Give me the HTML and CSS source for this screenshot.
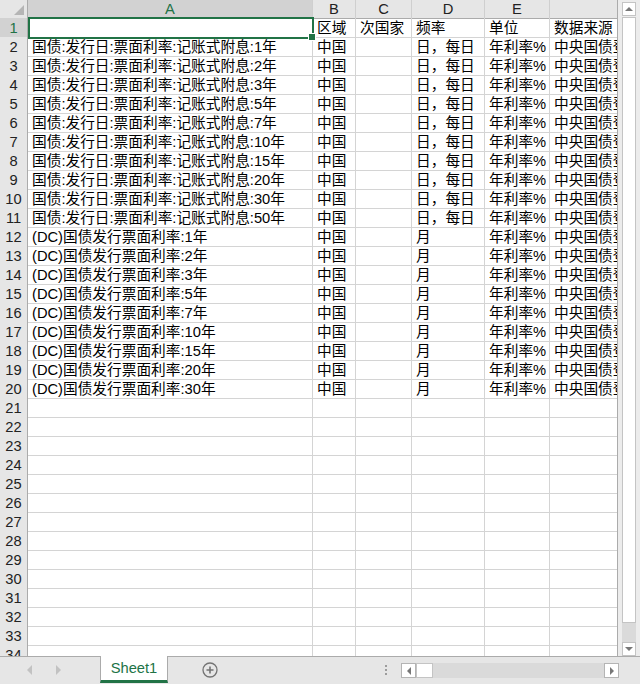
FILE: index.html
```html
<!DOCTYPE html>
<html lang="zh-CN">
<head>
    <meta charset="UTF-8">
    <meta name="viewport" content="width=device-width, initial-scale=1.0">
    <title>Sheet1</title>
    <link rel="stylesheet" href="styles.css">
</head>
<body>
    <main class="app">
        <section class="sheet-area">
            <div class="grid" id="grid">
                <div class="row head-row">
                    <div class="corner"><span class="corner-tri"></span></div>
                    <div class="col-head selected">A</div>
                    <div class="col-head">B</div>
                    <div class="col-head">C</div>
                    <div class="col-head">D</div>
                    <div class="col-head">E</div>
                    <div class="col-head last"></div>
                </div>
            </div>
            <div class="vscroll">
                <div class="sb-btn"><span class="arrow-up"></span></div>
                <div class="sb-thumb"></div>
                <div class="sb-track"></div>
                <div class="sb-btn"><span class="arrow-down"></span></div>
            </div>
        </section>
        <footer class="tabbar">
            <div class="tab-nav">
                <span class="nav-left"></span>
                <span class="nav-right"></span>
            </div>
            <div class="sheet-tab">Sheet1</div>
            <div class="add-sheet">
                <svg width="16" height="16" viewBox="0 0 16 16">
                    <circle cx="8" cy="8" r="7" fill="none" stroke="#737373" stroke-width="1.3"/>
                    <path d="M8 4.5v7M4.5 8h7" stroke="#737373" stroke-width="1.6"/>
                </svg>
            </div>
            <div class="split-dots"><i></i><i></i><i></i></div>
            <div class="hscroll">
                <div class="hs-btn"><span class="arrow-left"></span></div>
                <div class="hs-thumb"></div>
                <div class="hs-track"></div>
                <div class="hs-btn"><span class="arrow-right"></span></div>
            </div>
        </footer>
    </main>
    <script>
        const grid=document.getElementById("grid")
        const spans=[1,2,3,5,7,10,15,20,30,50]
        const dc=[1,2,3,5,7,10,15,20,30]
        let data=[["","区域","次国家","频率","单位","数据来源"]]
        for(const n of spans){
            data.push([`国债:发行日:票面利率:记账式附息:${n}年`,"中国","","日，每日","年利率%","中央国债登记结算"])
        }
        for(const n of dc){
            data.push([`(DC)国债发行票面利率:${n}年`,"中国","","月","年利率%","中央国债登记结算"])
        }
        let tmpStr=""
        for(let i=1;i<=34;i++){
            const cells=data[i-1]||["","","","","",""]
            tmpStr+=`<div class="row">
                <div class="row-head ${i==1?"selected":""}">${i}</div>
                ${cells.map((c,j)=>`<div class="cell ${i==1&&j==0?"active":""}">${c}</div>`).join("")}
            </div>`
        }
        grid.insertAdjacentHTML("beforeend",tmpStr)
    </script>
</body>
</html>
```

FILE: styles.css
```css
*{
    margin: 0;
    padding: 0;
    box-sizing: border-box;
}
body{
    font-family: "Liberation Sans", "Noto Sans CJK SC", sans-serif;
    font-size: 14.7px;
    color: #000;
    background-color: #e6e6e6;
}
.app{
    width: 640px;
    height: 684px;
    display: flex;
    flex-direction: column;
    overflow: hidden;
}
.sheet-area{
    height: 656px;
    display: flex;
    background-color: #ececec;
}
.grid{
    width: 618px;
    height: 656px;
    overflow: hidden;
    background-color: #fff;
    flex-shrink: 0;
}
.row{
    display: grid;
    grid-template-columns: 28px 285px 43px 56px 73px 65px 68px;
    height: 19px;
}
.head-row{
    height: 18px;
}
.corner,.col-head,.row-head{
    background-color: #e6e6e6;
    color: #222;
    text-align: center;
}
.corner{
    border-right: 1px solid #ababab;
    border-bottom: 1px solid #ababab;
    display: flex;
    justify-content: flex-end;
    align-items: flex-end;
    padding: 0 3px 3px 0;
}
.corner-tri{
    width: 0;
    height: 0;
    border-left: 10px solid transparent;
    border-bottom: 10px solid #b5b5b5;
}
.col-head{
    border-right: 1px solid #cfcfcf;
    border-bottom: 1px solid #ababab;
    padding-top: 1px;
    line-height: 17px;
}
.col-head.last{
    border-right: 1px solid #ababab;
}
.row-head{
    border-right: 1px solid #ababab;
    border-bottom: 1px solid #cfcfcf;
    padding-top: 1px;
    line-height: 18px;
}
.selected{
    background-color: #d2d2d2;
    color: #217346;
}
.cell{
    border-right: 1px solid #d4d4d4;
    border-bottom: 1px solid #d4d4d4;
    padding: 1px 4px 0 4px;
    line-height: 18px;
    white-space: nowrap;
    overflow: hidden;
}
.cell:last-child{
    border-right: 1px solid #ababab;
}
.cell.active{
    position: relative;
    overflow: visible;
}
.cell.active::after{
    content: "";
    position: absolute;
    left: 0;
    top: -1px;
    right: -2px;
    bottom: -2px;
    border: 2px solid #217346;
}
.cell.active::before{
    content: "";
    position: absolute;
    right: -4px;
    bottom: -4px;
    width: 6px;
    height: 6px;
    background-color: #217346;
    border: 1px solid #fff;
    z-index: 2;
}
.vscroll{
    width: 22px;
    padding: 2px 4px 0 4px;
    display: flex;
    flex-direction: column;
}
.sb-btn{
    height: 14px;
    background-color: #fff;
    border: 1px solid #c4c4c4;
    display: flex;
    justify-content: center;
    align-items: center;
}
.sb-thumb{
    height: 606px;
    background-color: #fff;
    border: 1px solid #c4c4c4;
    margin-top: 1px;
}
.sb-track{
    flex: 1;
    background-color: #dadada;
}
.arrow-up{
    border-left: 4px solid transparent;
    border-right: 4px solid transparent;
    border-bottom: 4px solid #777;
}
.arrow-down{
    border-left: 4px solid transparent;
    border-right: 4px solid transparent;
    border-top: 4px solid #777;
}
.tabbar{
    height: 28px;
    display: flex;
    align-items: flex-start;
    border-top: 1px solid #ababab;
    background-color: #e6e6e6;
}
.tab-nav{
    width: 100px;
    height: 26px;
    display: flex;
    align-items: center;
    padding-left: 27px;
    column-gap: 24px;
}
.nav-left{
    border-top: 5px solid transparent;
    border-bottom: 5px solid transparent;
    border-right: 5px solid #c2c2c2;
}
.nav-right{
    border-top: 5px solid transparent;
    border-bottom: 5px solid transparent;
    border-left: 5px solid #c2c2c2;
}
.sheet-tab{
    width: 68px;
    height: 27px;
    margin-top: -1px;
    background-color: #fff;
    border-left: 1px solid #ababab;
    border-right: 1px solid #ababab;
    border-bottom: 3px solid #217346;
    color: #217346;
    text-align: center;
    line-height: 24px;
}
.add-sheet{
    margin-left: 34px;
    height: 26px;
    display: flex;
    align-items: center;
}
.split-dots{
    margin-left: 167px;
    height: 26px;
    display: flex;
    flex-direction: column;
    justify-content: center;
    row-gap: 2px;
}
.split-dots i{
    width: 2px;
    height: 2px;
    background-color: #9c9c9c;
}
.hscroll{
    width: 218px;
    height: 15px;
    margin-top: 6px;
    margin-left: 14px;
    display: flex;
}
.hs-btn{
    width: 15px;
    background-color: #fff;
    border: 1px solid #b4b4b4;
    display: flex;
    justify-content: center;
    align-items: center;
}
.hs-thumb{
    width: 17px;
    background-color: #fff;
    border: 1px solid #c4c4c4;
}
.hs-track{
    flex: 1;
    background-color: #dadada;
}
.arrow-left{
    border-top: 4px solid transparent;
    border-bottom: 4px solid transparent;
    border-right: 4px solid #777;
}
.arrow-right{
    border-top: 4px solid transparent;
    border-bottom: 4px solid transparent;
    border-left: 4px solid #777;
}
```
